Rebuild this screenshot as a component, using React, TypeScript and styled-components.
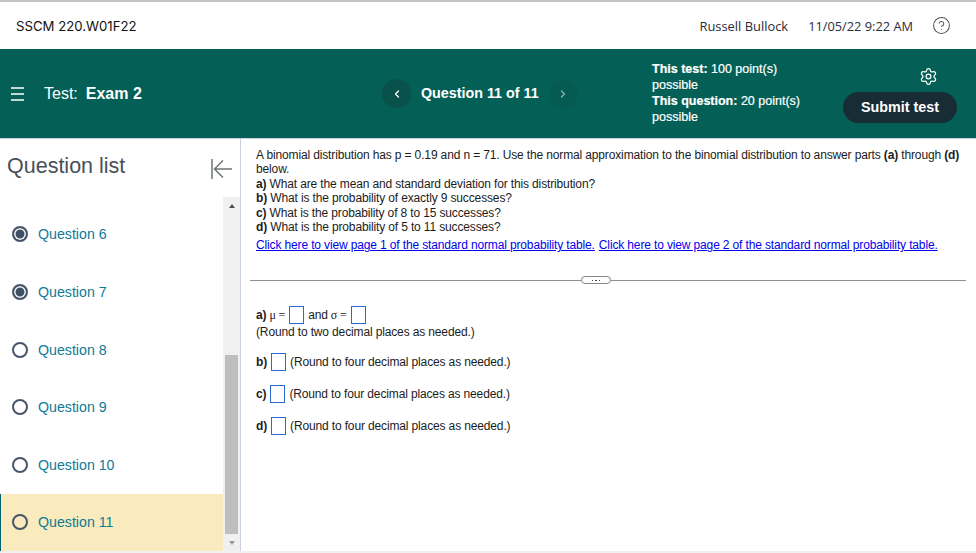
import React from "react";
import styled, { createGlobalStyle } from "styled-components";
import { ChevronLeft, ChevronRight, CircleHelp, Settings } from "lucide-react";

const GlobalStyle = createGlobalStyle`
  html, body {
    margin: 0;
    padding: 0;
    background: #fff;
    overflow: hidden;
  }
  * {
    box-sizing: border-box;
  }
`;

const Page = styled.div`
  width: 976px;
  height: 553px;
  display: flex;
  flex-direction: column;
  font-family: "Liberation Sans", Arial, sans-serif;
  border-top: 2px solid #c4c4c4;
  border-bottom: 2px solid #f0f0f0;
  overflow: hidden;
`;

const TopBar = styled.div`
  height: 47px;
  flex: none;
  display: flex;
  align-items: center;
  padding: 0 25px 0 16px;
  font-family: "Open Sans", sans-serif;
  font-size: 12.8px;
  color: #1a2530;
`;

const CourseName = styled.div`
  flex: 1;
  font-family: Inter, sans-serif;
  font-size: 13.2px;
  color: #111;
`;

const UserName = styled.div`
  margin-right: 20px;
  font-size: 12.9px;
  color: #2b2b3a;
`;

const DateText = styled.div`
  margin-right: 19px;
  color: #2b2f3a;
`;

const HelpIcon = styled(CircleHelp)`
  color: #555;
  display: block;
`;

const TestBar = styled.div`
  height: 89px;
  flex: none;
  display: flex;
  align-items: center;
  background: #046056;
  color: #fff;
`;

const TestTitle = styled.div`
  width: 382px;
  display: flex;
  align-items: center;
  padding-left: 11px;
  font-size: 16px;
`;

const MenuGlyph = styled.svg`
  display: block;
  margin-right: 20px;
`;

const TitleLabel = styled.span`
  margin-right: 8px;
`;

const Pager = styled.div`
  width: 270px;
  display: flex;
  align-items: center;
  font-size: 14.3px;
  font-weight: 700;
`;

const PagerButton = styled.div<{ $muted?: boolean }>`
  width: 29px;
  height: 29px;
  border-radius: 50%;
  display: flex;
  align-items: center;
  justify-content: center;
  background: ${(p) => (p.$muted ? "#055b52" : "#09524b")};
  color: ${(p) => (p.$muted ? "#8fb5af" : "#fff")};
`;

const PagerLabel = styled.div`
  margin: 0 10px;
  padding-bottom: 1px;
`;

const Points = styled.div`
  width: 191px;
  padding-bottom: 2px;
  font-size: 12.5px;
  line-height: 16px;
  -webkit-text-stroke: 0.2px #fff;
`;

const Actions = styled.div`
  width: 114px;
  display: flex;
  flex-direction: column;
  align-items: flex-end;
  gap: 6px;
  padding-top: 3px;
`;

const SettingsIcon = styled(Settings)`
  display: block;
  margin-right: 19px;
`;

const SubmitButton = styled.div`
  width: 114px;
  height: 31px;
  padding-bottom: 1px;
  border-radius: 16px;
  background: #182c36;
  display: flex;
  align-items: center;
  justify-content: center;
  font-size: 14.3px;
  font-weight: 700;
`;

const Main = styled.div`
  flex: 1;
  display: flex;
  min-height: 0;
  border-top: 1px solid #c9d1e0;
`;

const Sidebar = styled.div`
  width: 241px;
  flex: none;
  display: flex;
  flex-direction: column;
  border-right: 1px solid #c9d1e0;
`;

const SidebarHeader = styled.div`
  height: 58px;
  flex: none;
  display: flex;
  align-items: center;
  justify-content: space-between;
  padding: 0 8px 4px 7px;
  font-size: 21.5px;
  color: #4a4f57;
`;

const CollapseGlyph = styled.svg`
  display: block;
  margin-top: 5px;
`;

const ListArea = styled.div`
  flex: 1;
  display: flex;
  min-height: 0;
`;

const QuestionList = styled.div`
  flex: 1;
  display: flex;
  flex-direction: column;
  padding-top: 8.6px;
`;

const QuestionRow = styled.div<{ $active?: boolean }>`
  height: 57.6px;
  flex: none;
  display: flex;
  align-items: center;
  gap: 10px;
  padding-left: 12px;
  font-size: 14.2px;
  color: #0f7a96;
  background: ${(p) => (p.$active ? "#f9ebbd" : "transparent")};
  box-shadow: ${(p) => (p.$active ? "inset 1px 0 0 #04606f" : "none")};
`;

const RadioMark = styled.span<{ $checked?: boolean }>`
  width: 16px;
  height: 16px;
  border-radius: 50%;
  border: 2px solid #49566a;
  background: ${(p) => (p.$checked ? "#3f4f66" : "transparent")};
  box-shadow: ${(p) => (p.$checked ? "inset 0 0 0 1.5px #fff" : "none")};
  flex: none;
`;

const ScrollTrack = styled.div`
  width: 17px;
  flex: none;
  display: flex;
  flex-direction: column;
  align-items: center;
  background: #f0f0f0;
`;

const ScrollArrow = styled.div<{ $down?: boolean }>`
  width: 0;
  height: 0;
  flex: none;
  margin: 7px 0 6px;
  border-left: 3.5px solid transparent;
  border-right: 3.5px solid transparent;
  ${(p) => (p.$down ? "border-top: 4px solid #9a9a9a;" : "border-bottom: 4px solid #505050;")}
`;

const ScrollSpacer = styled.div`
  height: 141px;
  flex: none;
`;

const ScrollThumb = styled.div`
  width: 13px;
  flex: 1;
  background: #bebebe;
`;

const Content = styled.div`
  flex: 1;
  min-width: 0;
  padding: 9px 10px 0 9px;
  font-size: 12px;
  letter-spacing: -0.14px;
  line-height: 14.4px;
  color: #1c1c1c;
`;

const QuestionText = styled.div`
  padding: 0 0 0 6px;
  width: 712px;
`;

const Links = styled.div`
  margin-top: 4px;
  padding-left: 6px;
  white-space: nowrap;
  line-height: 14px;
`;

const TableLink = styled.a`
  color: #0000ee;
  text-decoration: underline;
  margin-right: 4px;
`;

const Divider = styled.div`
  display: flex;
  align-items: center;
  margin-top: 23px;
  height: 10px;
`;

const DividerLine = styled.div<{ $short?: boolean }>`
  height: 1px;
  background: #8a9096;
  flex: ${(p) => (p.$short ? "1" : "none")};
  width: ${(p) => (p.$short ? "auto" : "331px")};
`;

const DividerPill = styled.div`
  width: 30px;
  height: 8px;
  flex: none;
  border: 1px solid #7f868c;
  border-radius: 4px;
  display: flex;
  align-items: center;
  justify-content: center;
  gap: 2px;
`;

const PillDot = styled.span`
  width: 1.5px;
  height: 1.5px;
  background: #444;
`;

const Answers = styled.div`
  margin-top: 21px;
  padding-left: 6px;
`;

const AnswerRow = styled.div<{ $gap?: number }>`
  display: flex;
  align-items: center;
  height: 18px;
  margin-top: ${(p) => p.$gap ?? 0}px;
  white-space: nowrap;
`;

const Bold = styled.b`
  font-weight: 700;
`;

const MathText = styled.span`
  font-family: "Liberation Serif", serif;
  margin: 0 0 0 3px;
`;

const AnswerBox = styled.span`
  width: 15px;
  height: 18px;
  flex: none;
  border: 1px solid #2a6ad0;
  margin: 0 4px;
`;

const Hint = styled.div`
  height: 14px;
  margin-top: 1px;
`;

const items = [
  { n: 6, checked: true },
  { n: 7, checked: true },
  { n: 8 },
  { n: 9 },
  { n: 10 },
  { n: 11, active: true },
];

export default function App() {
  return (
    <Page>
      <GlobalStyle />
      <TopBar>
        <CourseName>SSCM 220.W01F22</CourseName>
        <UserName>Russell Bullock</UserName>
        <DateText>11/05/22 9:22 AM</DateText>
        <HelpIcon size={19} strokeWidth={1.3} />
      </TopBar>
      <TestBar>
        <TestTitle>
          <MenuGlyph width="13" height="14" viewBox="0 0 13 14" stroke="#fff" strokeWidth="1.4">
            <path d="M0 1h13M0 7h13M0 13h13" />
          </MenuGlyph>
          <TitleLabel>Test:</TitleLabel>
          <Bold>Exam 2</Bold>
        </TestTitle>
        <Pager>
          <PagerButton>
            <ChevronLeft size={12} strokeWidth={2.5} />
          </PagerButton>
          <PagerLabel>Question 11 of 11</PagerLabel>
          <PagerButton $muted>
            <ChevronRight size={12} strokeWidth={2.5} />
          </PagerButton>
        </Pager>
        <Points>
          <Bold>This test:</Bold> 100 point(s)
          <br />
          possible
          <br />
          <Bold>This question:</Bold> 20 point(s)
          <br />
          possible
        </Points>
        <Actions>
          <SettingsIcon size={19} strokeWidth={1.6} />
          <SubmitButton>Submit test</SubmitButton>
        </Actions>
      </TestBar>
      <Main>
        <Sidebar>
          <SidebarHeader>
            Question list
            <CollapseGlyph width="21" height="20" viewBox="0 0 21 20" fill="none" stroke="#6e7475" strokeWidth="1.5">
              <path d="M1 0v20M21 10H4M12 1.5 3.5 10l8.5 8.5" />
            </CollapseGlyph>
          </SidebarHeader>
          <ListArea>
            <QuestionList>
              {items.map((q) => (
                <QuestionRow key={q.n} $active={q.active}>
                  <RadioMark $checked={q.checked} />
                  Question {q.n}
                </QuestionRow>
              ))}
            </QuestionList>
            <ScrollTrack>
              <ScrollArrow />
              <ScrollSpacer />
              <ScrollThumb />
              <ScrollArrow $down />
            </ScrollTrack>
          </ListArea>
        </Sidebar>
        <Content>
          <QuestionText>
            A binomial distribution has p = 0.19 and n = 71. Use the normal approximation to the binomial distribution to answer parts <Bold>(a)</Bold> through <Bold>(d)</Bold>
            <br />
            below.
            <br />
            <Bold>a)</Bold> What are the mean and standard deviation for this distribution?
            <br />
            <Bold>b)</Bold> What is the probability of exactly 9 successes?
            <br />
            <Bold>c)</Bold> What is the probability of 8 to 15 successes?
            <br />
            <Bold>d)</Bold> What is the probability of 5 to 11 successes?
          </QuestionText>
          <Links>
            <TableLink>Click here to view page 1 of the standard normal probability table.</TableLink>
            <TableLink>Click here to view page 2 of the standard normal probability table.</TableLink>
          </Links>
          <Divider>
            <DividerLine />
            <DividerPill>
              <PillDot />
              <PillDot />
              <PillDot />
            </DividerPill>
            <DividerLine $short />
          </Divider>
          <Answers>
            <AnswerRow>
              <Bold>a)</Bold>
              <MathText>μ =</MathText>
              <AnswerBox />
              and
              <MathText>σ =</MathText>
              <AnswerBox />
            </AnswerRow>
            <Hint>(Round to two decimal places as needed.)</Hint>
            <AnswerRow $gap={14}>
              <Bold>b)</Bold>
              <AnswerBox />
              (Round to four decimal places as needed.)
            </AnswerRow>
            <AnswerRow $gap={14}>
              <Bold>c)</Bold>
              <AnswerBox />
              (Round to four decimal places as needed.)
            </AnswerRow>
            <AnswerRow $gap={14}>
              <Bold>d)</Bold>
              <AnswerBox />
              (Round to four decimal places as needed.)
            </AnswerRow>
          </Answers>
        </Content>
      </Main>
    </Page>
  );
}
